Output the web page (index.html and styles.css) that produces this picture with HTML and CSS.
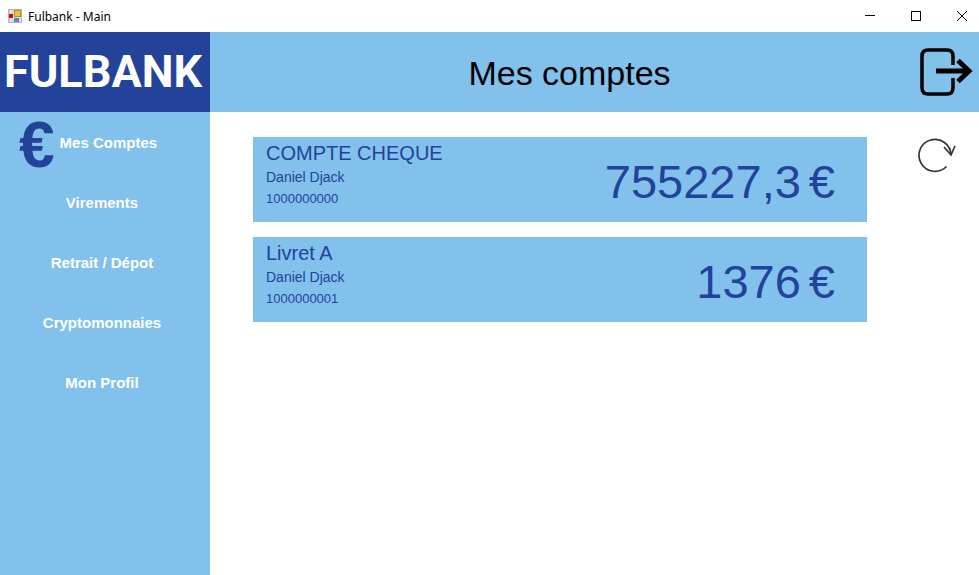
FILE: index.html
```html
<!DOCTYPE html>
<html lang="fr">
<head>
<meta charset="utf-8">
<title>Fulbank - Main</title>
<link rel="stylesheet" href="styles.css">
</head>
<body>
<div class="titlebar">
  <svg class="app-icon" width="15" height="15" viewBox="0 0 15 15" aria-hidden="true">
    <rect x=".5" y=".5" width="13" height="13" fill="#dcdcdc" stroke="#b5b5b5"/>
    <rect x="1" y="5" width="4" height="4" fill="#b3161b"/>
    <rect x="6.500" y="1.500" width="6" height="6" fill="#f5c33b" stroke="#c28a12"/>
    <rect x="6" y="9" width="5" height="4" fill="#4a86dc"/>
  </svg>
  <span class="app-name">Fulbank - Main</span>
  <div class="window-buttons">
    <button class="window-button" aria-label="Réduire">
      <svg width="10" height="10" viewBox="0 0 10 10"><path d="M0 4.500H10" stroke="#000"/></svg>
    </button>
    <button class="window-button" aria-label="Agrandir">
      <svg width="10" height="10" viewBox="0 0 10 10"><rect x=".5" y=".5" width="9" height="9" fill="none" stroke="#000"/></svg>
    </button>
    <button class="window-button" aria-label="Fermer">
      <svg width="10" height="10" viewBox="0 0 10 10"><path d="M0 0L10 10M10 0L0 10" stroke="#000"/></svg>
    </button>
  </div>
</div>
<div class="app">
  <aside class="sidebar">
    <div class="brand">FULBANK</div>
    <nav class="menu">
      <a class="menu-item active" href="#"><span class="euro" aria-hidden="true">€</span>Mes Comptes</a>
      <a class="menu-item" href="#">Virements</a>
      <a class="menu-item" href="#">Retrait / Dépot</a>
      <a class="menu-item" href="#">Cryptomonnaies</a>
      <a class="menu-item" href="#">Mon Profil</a>
    </nav>
  </aside>
  <div class="page">
    <header class="header">
      <h1 class="page-title">Mes comptes</h1>
      <button class="logout" aria-label="Se déconnecter">
        <svg width="54" height="48" viewBox="0 0 54 48" fill="none" stroke="#000">
          <path d="M34 17V8Q34 2 28 2H9Q3 2 3 8V40Q3 46 9 46H28Q34 46 34 40V30" stroke-width="3.500"/>
          <path d="M17 23H50" stroke-width="5"/>
          <path d="M39 12.500L50 23L39 33.500" stroke-width="5"/>
        </svg>
      </button>
    </header>
    <main class="content">
      <section class="accounts">
        <article class="account">
          <div class="details">
            <h2 class="account-name">COMPTE CHEQUE</h2>
            <p class="owner">Daniel Djack</p>
            <p class="number">1000000000</p>
          </div>
          <div class="amount"><span>755227,3</span> <span>€</span></div>
        </article>
        <article class="account">
          <div class="details">
            <h2 class="account-name">Livret A</h2>
            <p class="owner">Daniel Djack</p>
            <p class="number">1000000001</p>
          </div>
          <div class="amount"><span>1376</span> <span>€</span></div>
        </article>
      </section>
      <button class="refresh" aria-label="Actualiser">
        <svg width="38" height="36" viewBox="0 0 38 36" fill="none" stroke="#333" stroke-width="1.700">
          <path d="M28.500 29.500A16 16 0 1 1 33 18"/>
          <path d="M26 10L33 18L37 9"/>
        </svg>
      </button>
    </main>
  </div>
</div>
</body>
</html>
```
FILE: styles.css
```css
* {
  box-sizing: border-box;
}

body {
  margin: 0;
  min-height: 100vh;
  display: flex;
  flex-direction: column;
  background: #fff;
  font-family: "Liberation Sans", Arial, sans-serif;
}

h1, h2, p {
  margin: 0;
  font-weight: 400;
}

button {
  display: flex;
  align-items: center;
  justify-content: center;
  padding: 0;
  border: 0;
  background: none;
}

.titlebar {
  display: flex;
  align-items: center;
  height: 32px;
  padding-left: 8px;
}

.app-name {
  flex: 1;
  margin-left: 5px;
  font: 12px "Noto Sans", sans-serif;
}

.window-buttons {
  display: flex;
  gap: 12px;
}

.window-button {
  width: 34px;
  height: 30px;
}

.app {
  flex: 1;
  display: flex;
}

.sidebar {
  flex: none;
  width: 210px;
  background: #82c1ec;
}

.brand {
  display: flex;
  align-items: center;
  justify-content: center;
  height: 80px;
  padding: 0 4px 2px 0;
  background: #234299;
  color: #fff;
  font: 700 45px Roboto, sans-serif;
}

.menu {
  display: flex;
  flex-direction: column;
}

.menu-item {
  display: flex;
  align-items: center;
  justify-content: center;
  height: 60px;
  padding-right: 6px;
  color: #fff;
  font-size: 15px;
  font-weight: 700;
  text-decoration: none;
}

.menu-item.active {
  justify-content: flex-start;
  padding-left: 19px;
}

.euro {
  margin-right: 5px;
  padding-top: 6px;
  color: #234299;
  font-size: 64px;
  line-height: 60px;
}

.page {
  flex: 1;
  min-width: 0;
}

.header {
  display: flex;
  align-items: center;
  height: 80px;
  padding-right: 6px;
  background: #82c1ec;
}

.page-title {
  flex: 1;
  padding: 2px 0 0 10px;
  color: #000;
  font-size: 34px;
  text-align: center;
}

.content {
  display: flex;
  align-items: flex-start;
  justify-content: space-between;
  padding: 25px 23px 0 43px;
}

.accounts {
  flex: 1;
  display: flex;
  flex-direction: column;
  gap: 15px;
  margin-right: 51px;
}

.account {
  display: flex;
  align-items: center;
  justify-content: space-between;
  height: 85px;
  padding: 0 32px 0 13px;
  background: #82c1ec;
  color: #234299;
}

.account-name {
  margin-bottom: 2px;
  font-size: 20px;
  line-height: 22px;
}

.owner,
.number {
  font-size: 14px;
  line-height: 22px;
}

.number {
  font-size: 13px;
}

.details {
  padding-bottom: 8px;
}

.amount {
  display: flex;
  gap: 8px;
  padding-top: 4px;
  font-size: 47px;
  line-height: 60px;
  white-space: nowrap;
}
```
